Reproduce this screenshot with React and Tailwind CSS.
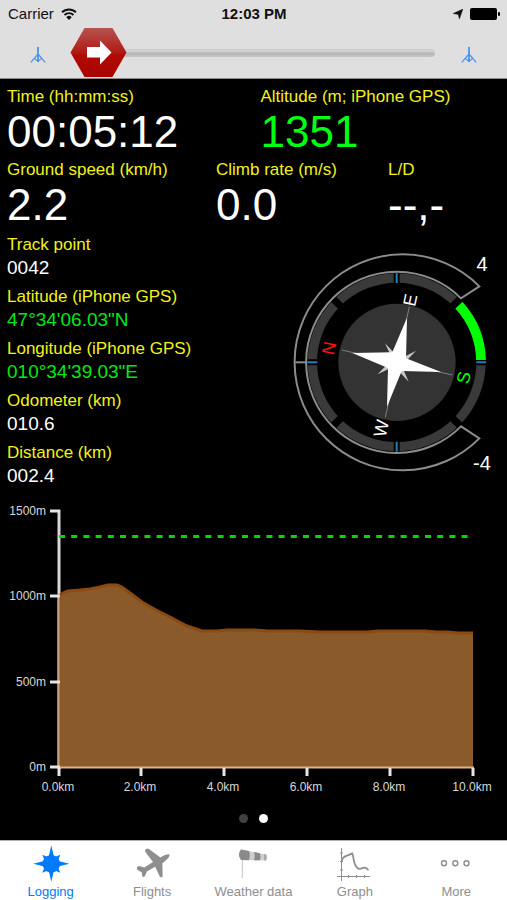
import React, { useState } from "react";

const THUMB_WIDTH = 57;

const details = [
  { label: "Track point", value: "0042", color: "text-white" },
  { label: "Latitude (iPhone GPS)", value: "47°34'06.03\"N", color: "text-[#00e914]" },
  { label: "Longitude (iPhone GPS)", value: "010°34'39.03\"E", color: "text-[#00e914]" },
  { label: "Odometer (km)", value: "010.6", color: "text-white" },
  { label: "Distance (km)", value: "002.4", color: "text-white" },
];

const yTicks = [
  { label: "1500m", y: 21 },
  { label: "1000m", y: 106 },
  { label: "500m", y: 192 },
  { label: "0m", y: 277 },
];

const xTicks = [
  { label: "0.0km", x: 59 },
  { label: "2.0km", x: 141 },
  { label: "4.0km", x: 224 },
  { label: "6.0km", x: 307 },
  { label: "8.0km", x: 390 },
  { label: "10.0km", x: 473 },
];

const terrain =
  "59,106 63,103 68,101 80,100 90,99 100,97 108,95 112,95 117,95 122,97 130,103 142,112 156,120 170,127 187,136 196,139 202,141 217,141 227,140 254,140 268,141 300,141 320,142 368,142 378,141 425,141 436,142 448,142 458,143 473,143";

const tabs = [
  { label: "Logging", Icon: LoggingIcon },
  { label: "Flights", Icon: FlightsIcon },
  { label: "Weather data", Icon: WindsockIcon },
  { label: "Graph", Icon: GraphIcon },
  { label: "More", Icon: MoreIcon },
];

function LoggingIcon() {
  return (
    <svg className="h-[38px] w-10" viewBox="0 0 40 38" fill="currentColor" aria-hidden="true">
      <circle cx="20.3" cy="18.7" r="8.8" />
      <path d="M20.3 .6 L23 12 H17.6 Z M20.3 36.8 L23 25 H17.6 Z M2.3 18.7 L13 16 V21.4 Z M38.3 18.7 L27 16 V21.4 Z" />
      <path d="M11.3 9.7 L18 12.4 L14 16.4 Z M29.3 9.7 L22.6 12.4 L26.6 16.4 Z M11.3 27.7 L18 25 L14 21 Z M29.3 27.7 L22.6 25 L26.6 21 Z" />
    </svg>
  );
}

function FlightsIcon() {
  return (
    <svg className="h-[38px] w-10" viewBox="0 0 40 38" fill="currentColor" aria-hidden="true">
      <path d="M37.4 9.6 C36.6 8.6 33 9.6 28.4 12.4 L17.3 4.2 C16 3.4 13.6 4 13.2 4.9 C12.8 5.8 13.4 7 14 7.8 L21 17 L12.4 22.4 L7.2 20.9 C5.8 20.8 4.6 22 5 24.4 L9.8 27.4 L10.4 31.8 C11.4 32.6 13.2 31.2 13.4 30 L14.8 26.4 L23.2 21.8 L27.6 31.2 C28.4 32.8 30.2 32.6 30.6 31.2 L30.4 18.2 C35 15 37.8 12 37.4 9.6 Z" />
    </svg>
  );
}

function WindsockIcon() {
  return (
    <svg className="h-[38px] w-10" viewBox="0 0 40 38" aria-hidden="true">
      <path d="M9.3 14 V33" stroke="#c4c4c4" strokeWidth="1" />
      <path d="M8 4.4 L33.2 9.4 Q34.4 12.4 33 15.4 L8 15 Q4 9.4 8 4.4 Z" fill="#cfcfcf" />
      <path d="M8 4.4 L16 6 Q17.6 10 16 15.2 L8 15 Q4 9.4 8 4.4 Z" fill="#8a8a8a" />
      <path d="M21 7 L27 8.2 Q28 12 27 15.3 L21 15.2 Q22.4 11 21 7 Z" fill="#8a8a8a" />
      <path d="M31 9 L33.2 9.4 Q34.4 12.4 33 15.4 L31 15.4 Z" fill="#a8a8a8" />
    </svg>
  );
}

function GraphIcon() {
  return (
    <svg className="h-[38px] w-10" viewBox="0 0 40 38" fill="none" stroke="currentColor" aria-hidden="true">
      <path d="M6.5 3 V36 M2 31.5 H35" strokeWidth="1" />
      <path d="M5 8 H8 M5 16.5 H8 M5 25 H8 M13.5 30 V33 M21.5 30 V33 M29.5 30 V33" strokeWidth="1.2" />
      <path d="M6.8 16 C7.6 10.6 12 11.4 17.2 8.4 C19 12 18 18.4 22 22.6 C25 26 27 22 30 22.6 C32 23 32.6 24 33.4 25.4" strokeWidth="1.8" />
    </svg>
  );
}

function MoreIcon() {
  return (
    <svg className="h-[38px] w-10" viewBox="0 0 40 38" fill="none" stroke="currentColor" strokeWidth="1.4" aria-hidden="true">
      <circle cx="8" cy="18.3" r="2.5" />
      <circle cx="19.3" cy="18.3" r="2.5" />
      <circle cx="30.5" cy="18.3" r="2.5" />
    </svg>
  );
}

function MastIcon() {
  return (
    <svg className="h-4 w-4" viewBox="0 0 16 16" fill="none" stroke="#4a93ea" aria-hidden="true">
      <path d="M8 0 V15" strokeWidth="1.8" />
      <path d="M8 7 L.8 15.4 M8 7 L15.2 15.4 M4.4 11.4 L8 14.5 L11.6 11.4" strokeWidth="1.2" />
    </svg>
  );
}

function StatusBar() {
  return (
    <div className="grid h-7 grid-cols-3 items-center pr-[7px] pl-2 text-[15px] leading-7 text-[#111]">
      <div className="flex items-center gap-[7px]">
        <span>Carrier</span>
        <svg className="h-3 w-4" viewBox="0 0 16 12" fill="none" stroke="#111" strokeWidth="1.9" aria-label="Wi-Fi">
          <path d="M1 4.3 A10 10 0 0 1 15 4.3 M3.5 7 A6.4 6.4 0 0 1 12.5 7" />
          <path d="M8 12 L5.3 9.2 A3.8 3.8 0 0 1 10.7 9.2 Z" fill="#111" stroke="none" />
        </svg>
      </div>
      <span className="text-center font-bold">12:03 PM</span>
      <div className="flex items-center justify-end gap-[7px]">
        <svg className="h-[10px] w-[10px]" viewBox="0 0 10 10" fill="#111" aria-label="Location">
          <path d="M10 0 L6.4 10 L5.2 5.4 L0 4.6 Z" stroke="#111" strokeWidth=".4" />
        </svg>
        <svg className="h-3 w-[30px]" viewBox="0 0 30 12" aria-label="Battery">
          <rect width="27" height="12" rx="2" fill="#000" />
          <rect x="28" y="4" width="2" height="4" rx="1" fill="#000" />
        </svg>
      </div>
    </div>
  );
}

function SlideBar() {
  const [value, setValue] = useState(0);

  return (
    <div className="flex h-[50px] items-center gap-6 px-7">
      <button type="button" aria-label="Start marker" className="flex w-5 justify-center pt-1">
        <MastIcon />
      </button>
      <div className="relative flex h-[50px] flex-1 items-center">
        <div className="h-2 w-full rounded-full border-t border-[#cbcbcb] bg-linear-to-b from-[#dcdcdc] via-[#b8b8b8] to-[#c6c6c6]" />
        <svg
          className="pointer-events-none absolute top-0 -ml-0.5 h-[50px] w-[57px]"
          style={{ left: `calc((100% - ${THUMB_WIDTH}px) * ${value / 100})` }}
          viewBox="0 0 57 50"
          aria-hidden="true"
        >
          <defs>
            <linearGradient id="thumb" x1="0" y1="0" x2="0" y2="1">
              <stop offset="0" stopColor="#b65450" />
              <stop offset="0.5" stopColor="#b01a14" />
              <stop offset="0.56" stopColor="#b00a04" />
              <stop offset="1" stopColor="#a80400" />
            </linearGradient>
          </defs>
          <path d="M14.5 0 H42.5 L56.5 24.5 L42.5 49 H14.5 L.5 24.5 Z" fill="url(#thumb)" />
          <path d="M17 19 H30 V12.5 L41.5 24.5 L30 36.5 V29.5 H17 Z" fill="#fff" />
        </svg>
        <input
          type="range"
          min="0"
          max="100"
          value={value}
          onChange={(e) => setValue(Number(e.target.value))}
          aria-label="Slide to start or stop logging"
          className="absolute inset-0 h-full w-full cursor-pointer opacity-0"
        />
      </div>
      <button type="button" aria-label="Stop marker" className="flex w-5 justify-center pt-1">
        <MastIcon />
      </button>
    </div>
  );
}

function Reading({ label, value, color = "text-white" }) {
  return (
    <div>
      <dt className="text-[17px] leading-5 text-[#f2f21a]">{label}</dt>
      <dd className={`text-[44px] leading-[50px] ${color}`}>{value}</dd>
    </div>
  );
}

function Compass() {
  return (
    <svg className="h-[245px] w-[222px] shrink-0" viewBox="0 0 666 735" role="img" aria-label="Compass with climb rate ring">
      {/* climb rate ring */}
      <circle cx="335" cy="382" r="253" fill="none" stroke="#3a3a3a" strokeWidth="28" />
      <path d="M145 192 L525 572 M525 192 L145 572" stroke="#000" strokeWidth="22" />
      <path d="M335 100 V664 M60 382 H610" stroke="#000" strokeWidth="18" />
      <path d="M335 114 V144 M335 620 V650 M67 382 H97 M574 382 H603" stroke="#1f7fb8" strokeWidth="6" />
      <path d="M522 211 A253 253 0 0 1 588 375" fill="none" stroke="#00ff00" strokeWidth="29" />
      <path
        d="M583 154 L528 190 A272 272 0 1 0 528 574 L583 610 A324 324 0 1 1 583 154 Z"
        fill="none"
        stroke="#8c8c8c"
        strokeWidth="6"
      />
      <path d="M31 382 H64" stroke="#8c8c8c" strokeWidth="6" />

      {/* rose */}
      <circle cx="336" cy="382" r="176" fill="#333" />
      <path d="M170 345 L502 420 M373 215 L301 547" stroke="#808080" strokeWidth="3" />
      <path d="M300 325 L345 372 L393 347 L350 392 L371 440 L328 394 L278 418 L322 372 Z" fill="#c8c8c8" />
      <path d="M366 248 L363 370 L468 411 L350 408 L306 515 L309 399 L202 354 L322 352 Z" fill="#fff" />

      <g fontSize="54" textAnchor="middle">
        <text transform="translate(150 343) rotate(-78)" fill="#ff1010">N</text>
        <text transform="translate(394 199) rotate(-78)" fill="#fff">E</text>
        <text transform="translate(554 432) rotate(-78)" fill="#00ff00">S</text>
        <text transform="translate(307 584) rotate(-78)" fill="#fff">W</text>
      </g>
      <g fontSize="60" fill="#fff" textAnchor="middle">
        <text x="591" y="108">4</text>
        <text x="591" y="705">-4</text>
      </g>
    </svg>
  );
}

function TerrainChart() {
  return (
    <svg className="mt-px w-full" viewBox="0 0 507 310" role="img" aria-label="Terrain profile">
      <path d="M59 20 V279" stroke="#d8d8d8" strokeWidth="3" />
      <path d={`M59,277 L${terrain} L473,277 Z`} fill="#8b5a2b" />
      <polyline points={terrain} fill="none" stroke="#8b4a12" strokeWidth="3" />
      <path d="M58.5 108 V277" stroke="#c7a07a" strokeWidth="2" />
      <path d="M58 277.5 H474" stroke="#d9b48c" strokeWidth="2" />
      <path d="M59 46.5 H469" stroke="#00d800" strokeWidth="3" strokeDasharray="6 6.2" />
      <g fontSize="12" fill="#d8d8d8">
        {yTicks.map((tick) => (
          <g key={tick.label}>
            <path d={`M50 ${tick.y} H60`} stroke="#e6e6e6" strokeWidth="3" />
            <text x="46" y={tick.y + 4} textAnchor="end">{tick.label}</text>
          </g>
        ))}
        {xTicks.map((tick) => (
          <g key={tick.label}>
            <path d={`M${tick.x} 278 V286`} stroke="#e6e6e6" strokeWidth="3" />
            <text x={tick.x - 1} y="301" textAnchor="middle">{tick.label}</text>
          </g>
        ))}
      </g>
    </svg>
  );
}

function TabBar() {
  const [active, setActive] = useState("Logging");

  return (
    <nav className="grid grid-cols-5 border-t border-[#b2b2b2] bg-white pt-1">
      {tabs.map(({ label, Icon }) => (
        <button
          key={label}
          type="button"
          onClick={() => setActive(label)}
          className={`flex flex-col items-center gap-px ${active === label ? "text-[#007aff]" : "text-[#8e8e8e]"}`}
        >
          <Icon />
          <span className="text-[13px] leading-4 whitespace-nowrap">{label}</span>
        </button>
      ))}
    </nav>
  );
}

export default function App() {
  const [page, setPage] = useState(1);

  return (
    <div className="flex min-h-screen flex-col bg-black font-['Liberation_Sans',Arial,sans-serif]">
      <header className="border-b border-[#8a8a8a] bg-[#dfdfdf]">
        <StatusBar />
        <SlideBar />
      </header>

      <main className="flex flex-1 flex-col pt-2">
        <dl className="grid grid-cols-2 gap-x-3.5 px-[7px]">
          <Reading label="Time (hh:mm:ss)" value="00:05:12" />
          <Reading label="Altitude (m; iPhone GPS)" value="1351" color="text-[#00ff14]" />
        </dl>
        <dl className="mt-[3px] grid grid-cols-[209fr_172fr_112fr] px-[7px]">
          <Reading label="Ground speed (km/h)" value="2.2" />
          <Reading label="Climb rate (m/s)" value="0.0" />
          <Reading label="L/D" value="--,-" />
        </dl>

        <div className="mt-[5px] flex justify-between pl-[7px]">
          <dl className="flex flex-col gap-1.5">
            {details.map((item) => (
              <div key={item.label}>
                <dt className="text-[17px] leading-5 text-[#f2f21a]">{item.label}</dt>
                <dd className={`text-[19px] leading-[26px] ${item.color}`}>{item.value}</dd>
              </div>
            ))}
          </dl>
          <Compass />
        </div>

        <TerrainChart />

        <div className="flex flex-1 items-center justify-center gap-[11px] pb-1">
          {[0, 1].map((index) => (
            <button
              key={index}
              type="button"
              aria-label={`Page ${index + 1}`}
              onClick={() => setPage(index)}
              className={`size-[9px] rounded-full ${page === index ? "bg-white" : "bg-[#404040]"}`}
            />
          ))}
        </div>
      </main>

      <TabBar />
    </div>
  );
}
